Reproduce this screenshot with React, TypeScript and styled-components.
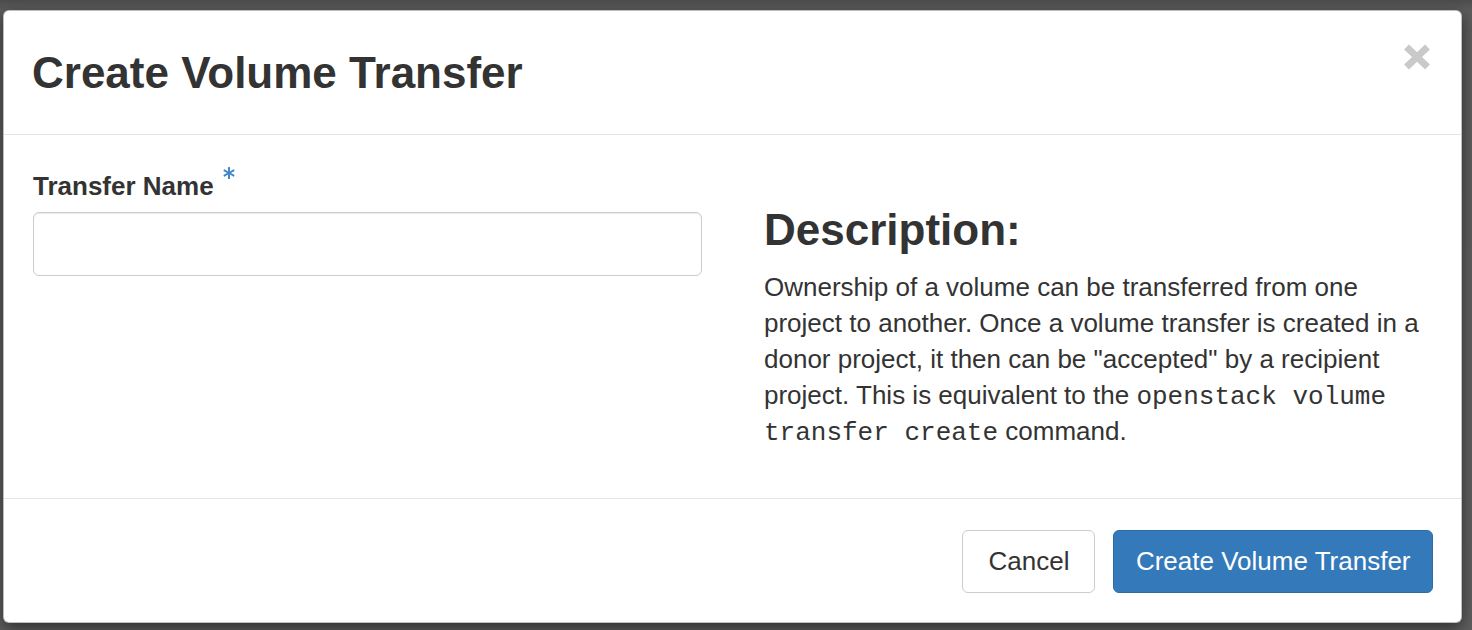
import React from "react";
import styled, { createGlobalStyle } from "styled-components";
import { FaAsterisk } from "react-icons/fa";

const GlobalStyle = createGlobalStyle`
  html, body {
    margin: 0;
    padding: 0;
    background: #5e5e5e;
    font-family: "Liberation Sans", Helvetica, Arial, sans-serif;
    color: #333;
  }
  * { box-sizing: border-box; }
`;

const Backdrop = styled.div`
  min-height: 100vh;
  padding: 10px 0 0 3px;
  background: linear-gradient(#4c4c4c 0, #5c5c5c 10px, #5e5e5e 100%);
`;

const Modal = styled.div`
  width: 1459px;
  background: #fff;
  border: 1px solid rgba(0, 0, 0, 0.25);
  border-radius: 6px;
  box-shadow: 0 5px 15px rgba(0, 0, 0, 0.5);
`;

const Header = styled.div`
  display: flex;
  justify-content: space-between;
  align-items: flex-start;
  padding: 38px 28px 37px 28px;
  border-bottom: 1px solid #e5e5e5;
`;

const Title = styled.h3`
  margin: 0;
  font-size: 44px;
  font-weight: 700;
  line-height: 1.1;
  color: #333;
`;

const CloseButton = styled.button`
  display: flex;
  margin: -5px 2px 0 0;
  padding: 0;
  border: 0;
  background: transparent;
  cursor: pointer;
`;

const Body = styled.div`
  display: grid;
  grid-template-columns: 1fr 1fr;
  column-gap: 62px;
  padding: 33px 28px 49px 29px;
`;

const Column = styled.div`
  display: flex;
  flex-direction: column;
`;

const Label = styled.label`
  display: block;
  margin: 0 0 8px;
  font-size: 26px;
  font-weight: 700;
  line-height: 36px;
  color: #333;
`;

const Required = styled.span`
  display: inline-block;
  vertical-align: top;
  margin-left: 9px;
  margin-top: -1px;
  color: #3f86c8;
  line-height: 0;
`;

const Input = styled.input`
  display: block;
  width: 100%;
  height: 64px;
  padding: 0 20px;
  border: 1px solid #ccc;
  border-radius: 6px;
  box-shadow: inset 0 1px 1px rgba(0, 0, 0, 0.075);
  font-family: inherit;
  font-size: 26px;
  color: #555;
  outline: none;
`;

const DescTitle = styled.h3`
  margin: 38px 0 14px;
  font-size: 44px;
  font-weight: 700;
  line-height: 1.1;
  color: #333;
`;

const DescText = styled.p`
  margin: 0;
  font-size: 26px;
  line-height: 36px;
  color: #333;
`;

const Code = styled.code`
  font-family: "Liberation Mono", Menlo, monospace;
  font-size: 26px;
  line-height: 0;
  color: #333;
`;

const Footer = styled.div`
  display: flex;
  justify-content: flex-end;
  gap: 18px;
  padding: 31px 28px 29px;
  border-top: 1px solid #e5e5e5;
`;

const Button = styled.button<{ $primary?: boolean }>`
  display: inline-flex;
  align-items: center;
  justify-content: center;
  height: 63px;
  padding: ${(p) => (p.$primary ? "0 21.5px" : "0 25px")};
  border-radius: 6px;
  border: 1px solid ${(p) => (p.$primary ? "#2e6da4" : "#ccc")};
  background: ${(p) => (p.$primary ? "#3479b9" : "#fff")};
  color: ${(p) => (p.$primary ? "#fff" : "#333")};
  font-family: inherit;
  font-size: 26px;
  line-height: 1;
  cursor: pointer;
`;

const CloseIcon = () => (
  <svg width="28" height="26" viewBox="0 0 28 26" aria-hidden="true">
    <path
      d="M3.5 3 L24.5 23 M24.5 3 L3.5 23"
      stroke="#c9c9c9"
      strokeWidth="7"
      fill="none"
    />
  </svg>
);

export default function App() {
  return (
    <>
      <GlobalStyle />
      <Backdrop>
        <Modal role="dialog">
          <Header>
            <Title>Create Volume Transfer</Title>
            <CloseButton aria-label="Close">
              <CloseIcon />
            </CloseButton>
          </Header>
          <Body>
            <Column>
              <Label htmlFor="transfer-name">
                Transfer Name
                <Required>
                  <FaAsterisk size={12} />
                </Required>
              </Label>
              <Input id="transfer-name" type="text" />
            </Column>
            <Column>
              <DescTitle>Description:</DescTitle>
              <DescText>
                Ownership of a volume can be transferred from one project to
                another. Once a volume transfer is created in a donor project,
                it then can be "accepted" by a recipient project. This is
                equivalent to the <Code>openstack volume transfer create</Code>{" "}
                command.
              </DescText>
            </Column>
          </Body>
          <Footer>
            <Button>Cancel</Button>
            <Button $primary>Create Volume Transfer</Button>
          </Footer>
        </Modal>
      </Backdrop>
    </>
  );
}
